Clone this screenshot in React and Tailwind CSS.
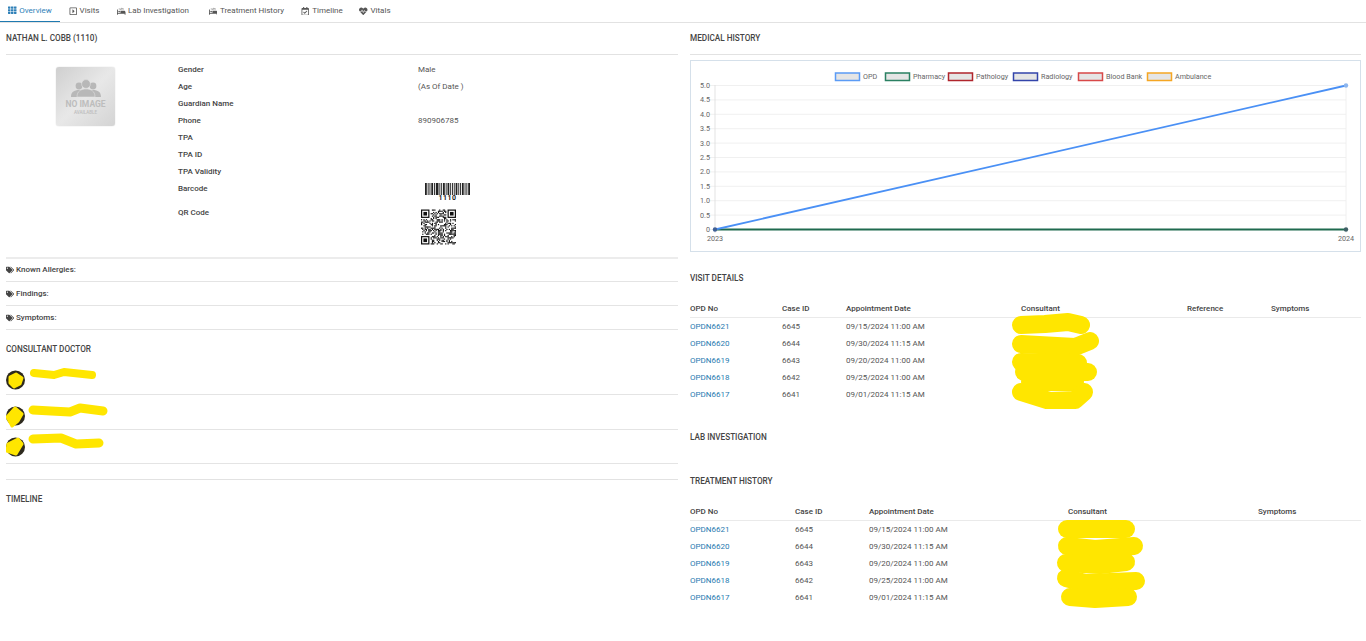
import React from 'react';
import { FaTh, FaRegCaretSquareRight, FaProcedures, FaRegCalendarCheck, FaHeartbeat, FaTags } from 'react-icons/fa';

const tabs = [
  { label: 'Overview', icon: FaTh, active: true, width: 'w-[60px]' },
  { label: 'Visits', icon: FaRegCaretSquareRight, width: 'w-[48px]' },
  { label: 'Lab Investigation', icon: FaProcedures, width: 'w-[90px]' },
  { label: 'Treatment History', icon: FaProcedures, width: 'w-[97px]' },
  { label: 'Timeline', icon: FaRegCalendarCheck, width: 'w-[54px]' },
  { label: 'Vitals', icon: FaHeartbeat, width: 'w-[52px]' },
];

const details = [
  { label: 'Gender', value: 'Male' },
  { label: 'Age', value: '(As Of Date )' },
  { label: 'Guardian Name' },
  { label: 'Phone', value: '890906785' },
  { label: 'TPA' },
  { label: 'TPA ID' },
  { label: 'TPA Validity' },
];

const visits = [
  ['OPDN6621', '6645', '09/15/2024 11:00 AM'],
  ['OPDN6620', '6644', '09/30/2024 11:15 AM'],
  ['OPDN6619', '6643', '09/20/2024 11:00 AM'],
  ['OPDN6618', '6642', '09/25/2024 11:00 AM'],
  ['OPDN6617', '6641', '09/01/2024 11:15 AM'],
];

const legend = [
  { name: 'OPD', x: 835, color: '#5b9bf5' },
  { name: 'Pharmacy', x: 885, color: '#2a8062' },
  { name: 'Pathology', x: 948, color: '#b0252c' },
  { name: 'Radiology', x: 1013, color: '#3344aa' },
  { name: 'Blood Bank', x: 1078, color: '#d84848' },
  { name: 'Ambulance', x: 1147, color: '#f5a623' },
];

const barWidths = [2, 1, 1, 2, 1, 3, 1, 1, 2, 1, 2, 1, 1, 1, 2, 1, 1, 2, 1, 1, 3, 1];

const Barcode = () => {
  let x = 0;
  return (
    <svg className="block" width="45" height="12" viewBox="0 0 45 12">
      {barWidths.map((w, i) => {
        const bar = <rect key={i} x={x} y="0" width={w * 0.9} height="12" fill="#222" />;
        x += (w + 1) * 0.9;
        return bar;
      })}
    </svg>
  );
};

const QrCode = () => {
  const size = 29;
  const cells = [];
  let seed = 1110;
  for (let y = 0; y < size; y++) {
    for (let x = 0; x < size; x++) {
      seed = (seed * 1103515245 + 12345) % 2147483648;
      const inFinder = (x < 8 && y < 8) || (x > 20 && y < 8) || (x < 8 && y > 20);
      if (!inFinder && (seed >> 16) % 100 > 50) cells.push([x, y]);
    }
  }
  const finder = (x, y) => (
    <g key={`${x}-${y}`}>
      <rect x={x} y={y} width="7" height="7" fill="#111" />
      <rect x={x + 1} y={y + 1} width="5" height="5" fill="#fff" />
      <rect x={x + 2} y={y + 2} width="3" height="3" fill="#111" />
    </g>
  );
  return (
    <svg className="block" width="35" height="36" viewBox="0 0 29 29">
      {cells.map(([x, y]) => <rect key={`${x}:${y}`} x={x} y={y} width="1" height="1" fill="#111" />)}
      {finder(0, 0)}
      {finder(22, 0)}
      {finder(0, 22)}
    </svg>
  );
};

const NoImage = () => (
  <div className="flex h-[59px] w-[59px] flex-col items-center rounded-[3px] bg-gradient-to-br from-[#cfcfcf] via-[#e8e8e8] to-[#d4d4d4] pt-[12px] shadow-[0_0_1px_#bbb]">
    <svg width="32" height="18" viewBox="0 0 32 18" fill="#b8b8b8">
      <circle cx="9" cy="7" r="3.4" />
      <circle cx="23" cy="7" r="3.4" />
      <path d="M1 18c0-5 3-7 8-7s8 2 8 7zM15 18c0-5 3-7 8-7s8 2 8 7z" />
      <circle cx="16" cy="5" r="4.4" stroke="#e0e0e0" strokeWidth="0.6" />
      <path d="M7 18c0-6 4-8 9-8s9 2 9 8z" stroke="#e0e0e0" strokeWidth="0.6" />
    </svg>
    <span className="mt-[3px] text-[8.5px] font-bold leading-[9px] text-[#bdbdbd]">NO IMAGE</span>
    <span className="text-[4.5px] font-medium leading-[7px] text-[#bdbdbd]">AVAILABLE</span>
  </div>
);

const Heading = ({ children, className = '' }) => (
  <div className={`flex items-center text-[8.2px] font-medium text-[#444] ${className}`}>{children}</div>
);

const TagRow = ({ label, height }) => (
  <div className={`flex items-center gap-[2px] border-b border-[#e4e4e4] font-medium text-[#444] ${height}`}>
    <FaTags className="text-[8px] text-[#444]" />
    <span>{label}</span>
  </div>
);

const DoctorRow = ({ height, avatarY, scribble, width = 9, viewY, blob }) => (
  <div className={`border-b border-[#e4e4e4] ${height}`}>
    <svg className="block" width="110" height="34" viewBox={`0 ${viewY} 110 34`}>
      <circle cx="9.5" cy={avatarY} r="9.5" fill="#2e2a1e" />
      <path d={blob} fill="#ffe600" stroke="#ffe600" strokeWidth="3" strokeLinejoin="round" />
      <path d={scribble} fill="none" stroke="#ffe600" strokeWidth={width} strokeLinecap="round" strokeLinejoin="round" />
    </svg>
  </div>
);

const VisitTable = ({ columns, headers, scribble, left, viewBox, headerHeight }) => (
  <div className="relative">
    <div className={`grid items-center border-b border-[#eaeaea] pt-[2px] font-medium text-[#444] ${columns} ${headerHeight}`}>
      {headers.map((h) => <span key={h}>{h}</span>)}
    </div>
    {visits.map(([opd, caseId, date]) => (
      <div key={opd} className={`grid h-[17px] items-center text-[#555] ${columns}`}>
        <span className="text-[#1f7ab0]">{opd}</span>
        <span>{caseId}</span>
        <span>{date}</span>
      </div>
    ))}
    <svg className={`absolute top-0 ${left}`} width="100" height="110" viewBox={viewBox}>
      {scribble.map((d, i) => (
        <path key={i} d={d} fill="none" stroke="#ffe600" strokeWidth="18" strokeLinecap="round" strokeLinejoin="round" />
      ))}
    </svg>
  </div>
);

const Chart = () => {
  const ticks = ['5.0', '4.5', '4.0', '3.5', '3.0', '2.5', '2.0', '1.5', '1.0', '0.5', '0'];
  return (
    <svg className="block" width="669" height="190" viewBox="691 61 669 190" fontFamily="Roboto, sans-serif" fontSize="7.2" fill="#666">
      {legend.map((item) => (
        <g key={item.name}>
          <rect x={item.x + 0.5} y="73" width="24" height="7.5" fill="#e5e5e5" stroke={item.color} strokeWidth="1.5" />
          <text x={item.x + 28} y="78.5">{item.name}</text>
        </g>
      ))}
      {ticks.map((t, i) => {
        const y = 85.5 + i * 14.4;
        return (
          <g key={t}>
            <line x1="709" x2="1346" y1={y} y2={y} stroke="#ececec" strokeWidth="0.8" />
            <text x="710" y={y + 2.5} textAnchor="end">{t}</text>
          </g>
        );
      })}
      <line x1="715" x2="715" y1="85" y2="233" stroke="#dcdcdc" strokeWidth="0.8" />
      <line x1="1346" x2="1346" y1="85" y2="233" stroke="#ececec" strokeWidth="0.8" />
      <line x1="715" x2="1346" y1="229.5" y2="229.5" stroke="#1f6a4f" strokeWidth="1.8" />
      <line x1="715" x2="1346" y1="229.5" y2="85.5" stroke="#4a90f5" strokeWidth="1.8" />
      <circle cx="715" cy="229.5" r="2.2" fill="#3f5f96" />
      <circle cx="1346" cy="229.5" r="2.2" fill="#3f5f66" />
      <circle cx="1346" cy="85.5" r="2.2" fill="#8db6ee" />
      <text x="715" y="241" textAnchor="middle">2023</text>
      <text x="1346" y="241" textAnchor="middle">2024</text>
    </svg>
  );
};

export default function App() {
  return (
    <div className="h-[641px] w-[1366px] overflow-hidden bg-white font-['Roboto',sans-serif] text-[8px] text-[#444]">
      {/* Tabs */}
      <div className="flex h-[23px] border-b border-[#e2e2e2]">
        {tabs.map(({ label, icon: Icon, active, width }) => (
          <div
            key={label}
            className={`flex h-[22px] items-center justify-center gap-[2.5px] ${width} ${active ? 'border-b-[1.5px] border-[#1f7ab0] text-[#2f80b8]' : 'text-[#555]'}`}
          >
            <Icon className="text-[8.5px]" />
            <span>{label}</span>
          </div>
        ))}
      </div>

      <div className="flex gap-[12px] pl-[6px]">
        {/* Left column */}
        <div className="w-[672px] shrink-0">
          <Heading className="h-[32px] border-b border-[#e2e2e2]">NATHAN L. COBB (1110)</Heading>

          <div className="flex h-[204px] border-b-2 border-[#ececec]">
            <div className="w-[172px] pl-[50px] pt-[12px]">
              <NoImage />
            </div>
            <div className="pt-[6px]">
              {details.map((row) => (
                <div key={row.label} className="grid h-[17px] grid-cols-[240px_200px] items-center">
                  <span className="font-medium">{row.label}</span>
                  <span className="text-[#555]">{row.value}</span>
                </div>
              ))}
              <div className="grid h-[24px] grid-cols-[240px_200px]">
                <span className="pt-[3px] font-medium">Barcode</span>
                <div className="pl-[7px] pt-[3px]">
                  <Barcode />
                  <div className="w-[45px] text-center text-[7px] font-bold leading-[6px] tracking-[0.5px] text-[#222]">1110</div>
                </div>
              </div>
              <div className="grid grid-cols-[240px_200px]">
                <span className="pt-[3px] font-medium">QR Code</span>
                <div className="pl-[3px] pt-[5px]">
                  <QrCode />
                </div>
              </div>
            </div>
          </div>

          <TagRow label="Known Allergies:" height="h-[23px]" />
          <TagRow label="Findings:" height="h-[24px]" />
          <TagRow label="Symptoms:" height="h-[24px]" />

          <Heading className="h-[38px] pt-[1px]">CONSULTANT DOCTOR</Heading>
          <DoctorRow
            height="h-[27px] overflow-hidden"
            viewY={2}
            avatarY={14}
            blob="M4 11l6-3 6 4-2 6-6 3-4-4z"
            scribble="M28 7L48 9L58 6L86 9"
            width={8}
          />
          <DoctorRow
            height="h-[35px] overflow-hidden"
            viewY={-2}
            avatarY={19}
            blob="M1 20l8-9 7 6-4 7-6 5z"
            scribble="M27 13L45 14L64 15L74 11L97 14"
            width={9}
          />
          <DoctorRow
            height="h-[34px] overflow-hidden"
            viewY={0}
            avatarY={17}
            blob="M2 14l10-5 4 5-6 10-9-3z"
            scribble="M27 9L55 8L70 14L93 13"
            width={9}
          />
          <div className="h-[16px] border-b border-[#e2e2e2]" />
          <Heading className="h-[38px]">TIMELINE</Heading>
        </div>

        {/* Right column */}
        <div className="w-[671px] shrink-0">
          <Heading className="h-[32px] border-b border-[#e2e2e2]">MEDICAL HISTORY</Heading>
          <div className="mt-[5px] h-[192px] border border-[#d5e0ea]">
            <Chart />
          </div>

          <Heading className="h-[47px] pt-[5px]">VISIT DETAILS</Heading>
          <VisitTable
            columns="grid-cols-[92px_64px_175px_166px_84px_1fr]"
            headerHeight="h-[19px]"
            headers={['OPD No', 'Case ID', 'Appointment Date', 'Consultant', 'Reference', 'Symptoms']}
            left="left-[320px]"
            viewBox="1010 299 100 110"
            scribble={[
              'M1021 325L1045 324L1068 322L1081 325',
              'M1021 344L1075 347L1090 341',
              'M1021 362L1078 363',
              'M1024 372L1088 372',
              'M1030 382L1075 382',
              'M1021 392L1050 401L1075 400L1084 392',
            ]}
          />

          <Heading className="h-[68px]">LAB INVESTIGATION</Heading>
          <Heading className="h-[31px] pb-[10px]">TREATMENT HISTORY</Heading>
          <VisitTable
            columns="grid-cols-[105px_74px_199px_190px_1fr]"
            headerHeight="h-[19px]"
            headers={['OPD No', 'Case ID', 'Appointment Date', 'Consultant', 'Symptoms']}
            left="left-[365px]"
            viewBox="1055 502 100 110"
            scribble={[
              'M1067 529L1126 529',
              'M1067 546L1095 549L1134 546',
              'M1066 563L1100 565L1126 562',
              'M1066 578L1085 583L1136 581',
              'M1070 597L1095 599L1128 597',
            ]}
          />
        </div>
      </div>
    </div>
  );
}
